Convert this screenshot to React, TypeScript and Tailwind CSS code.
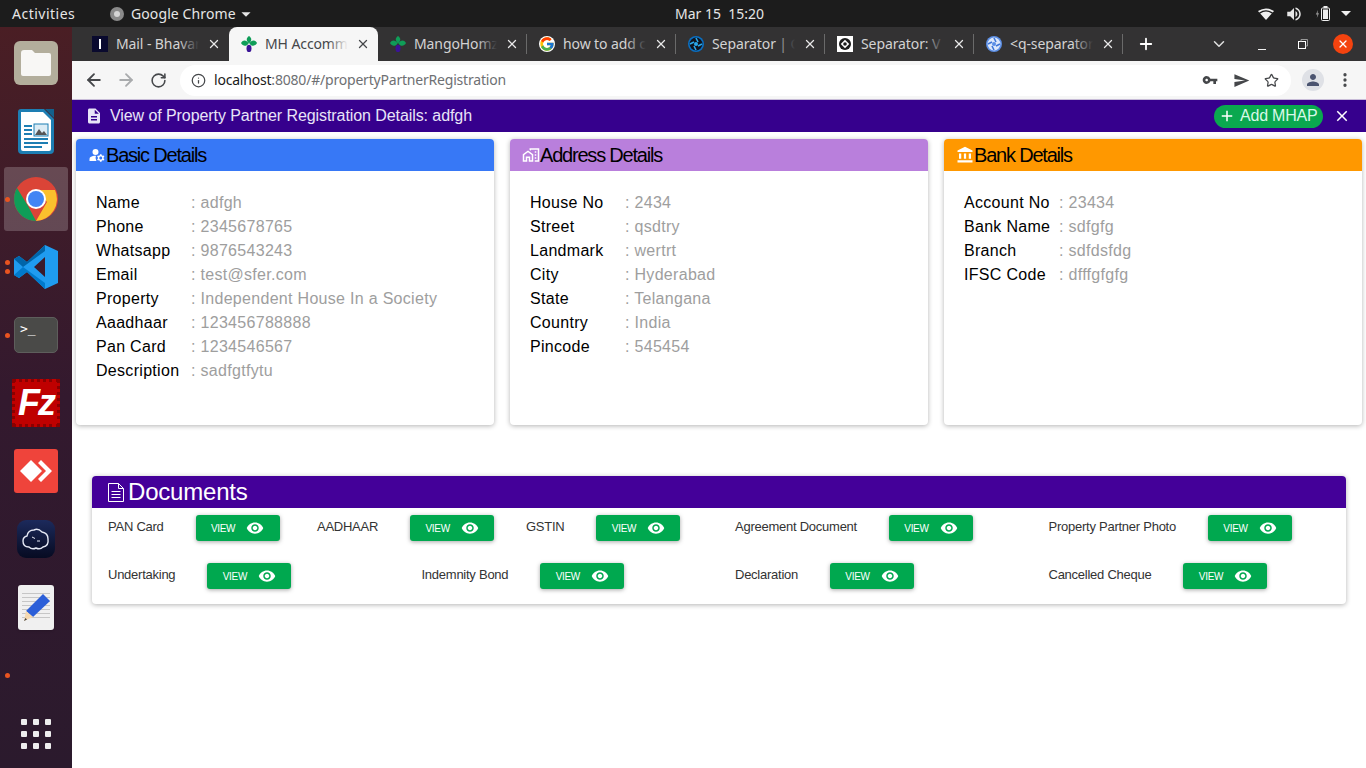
import React from 'react';
import { ArrowLeft, ArrowRight, ChevronDown, EllipsisVertical, Info, Plus, RotateCw, Star, X } from 'lucide-react';
import { FcGoogle } from 'react-icons/fc';
import {
  MdAccountBalance,
  MdAdd,
  MdArrowDropDown,
  MdClose,
  MdDescription,
  MdManageAccounts,
  MdOutlineHomeWork,
  MdPerson,
  MdSend,
  MdVisibility,
  MdVolumeUp,
  MdVpnKey,
} from 'react-icons/md';

const MangoIcon = () => (
  <svg viewBox="0 0 16 16" className="w-4 h-4">
    <path d="M8 0 C11 2 11 5 8 7.5 C5 5 5 2 8 0Z" fill="#0f9d58" />
    <path d="M0 7 C2 3.5 5.5 3.8 7.6 7.4 C5.5 10.5 2 10.5 0 7Z" fill="#0f9d58" />
    <path d="M16 7 C14 3.5 10.5 3.8 8.4 7.4 C10.5 10.5 14 10.5 16 7Z" fill="#0f9d58" />
    <ellipse cx="8" cy="12.4" rx="2.5" ry="3.6" fill="#3a1396" />
  </svg>
);

const MailIcon = () => (
  <div className="w-4 h-4 bg-[#0a0a2e] flex items-center justify-center">
    <div className="w-[2px] h-[10px] bg-white" />
  </div>
);

const QuasarIcon = ({ light }: { light?: boolean }) => (
  <svg viewBox="0 0 16 16" className="w-4 h-4">
    <circle cx="8" cy="8" r="8" fill={light ? '#5c8fe6' : '#0a6fc2'} />
    <circle cx="8" cy="8" r="6.4" fill={light ? '#dce8fb' : '#10131c'} />
    <circle cx="8" cy="8" r="2" fill={light ? '#5c8fe6' : '#2aa7e8'} />
    <path d="M8 2 L10 6 M14 8 L10 10 M8 14 L6 10 M2 8 L6 6" stroke={light ? '#3c74d8' : '#2aa7e8'} strokeWidth="1.6" />
  </svg>
);

const TargetIcon = () => (
  <svg viewBox="0 0 16 16" className="w-4 h-4">
    <rect width="16" height="16" fill="#fff" />
    <circle cx="8" cy="8" r="6" fill="#1c1c1c" />
    <rect x="5" y="5" width="6" height="6" transform="rotate(45 8 8)" fill="#fff" />
    <circle cx="8" cy="8" r="1.8" fill="#1c1c1c" />
  </svg>
);

const tabs = [
  { title: 'Mail - Bhavar', icon: <MailIcon />, sep: false },
  { title: 'MH Accomm', icon: <MangoIcon />, active: true, sep: false },
  { title: 'MangoHomz', icon: <MangoIcon />, sep: true },
  { title: 'how to add c', icon: <FcGoogle className="w-4 h-4 bg-white rounded-full" />, sep: true },
  { title: 'Separator | Q', icon: <QuasarIcon />, sep: true },
  { title: 'Separator: V', icon: <TargetIcon />, sep: true },
  { title: '<q-separator', icon: <QuasarIcon light />, sep: true },
];

const TopBar = () => (
  <div className="h-[27px] bg-[#1c1c1c] text-[#e6e6e6] text-[14px] flex items-center relative shrink-0">
    <span className="ml-3 w-[98px] tracking-[0.5px]">Activities</span>
    <div className="w-[14px] h-[14px] rounded-full bg-[#8a8a8a] flex items-center justify-center mr-[7px]">
      <div className="w-[6px] h-[6px] rounded-full bg-[#d5d5d5]" />
    </div>
    <span className="tracking-[0.1px]">Google Chrome</span>
    <MdArrowDropDown className="w-[22px] h-[22px] -ml-[1px]" />
    <span className="absolute left-[675px] whitespace-pre">Mar 15  15:20</span>
    <div className="ml-auto flex items-center mr-[15px]">
      <svg viewBox="0 0 16 12" className="w-4 h-3 text-[#f0f0f0]" fill="currentColor">
        <path d="M0 3 Q8 -2 16 3 L14.8 4.6 Q8 0 1.2 4.6Z" />
        <path d="M2.2 5.6 Q8 1.6 13.8 5.6 L8 12Z" />
      </svg>
      <MdVolumeUp className="ml-[11px] w-[18px] h-[18px]" />
      <svg viewBox="0 0 15 15" className="ml-[12px] w-[15px] h-[15px] text-[#f0f0f0]" fill="none" stroke="currentColor">
        <path d="M3 4 L0.8 8.5 H2.4 L1.8 12 L4 7.2 H2.6Z" fill="#9a9a9a" stroke="none" />
        <rect x="6.5" y="2" width="8" height="12.5" rx="1" />
        <rect x="8" y="3.5" width="5" height="9.5" fill="currentColor" stroke="none" />
        <rect x="8.5" y="0" width="4" height="2" fill="currentColor" stroke="none" />
      </svg>
      <div className="ml-[11px] w-0 h-0 border-x-[5px] border-x-transparent border-t-[5px] border-t-[#f0f0f0]" />
    </div>
  </div>
);

const TabStrip = () => (
  <div className="h-[34px] bg-[#333233] flex items-stretch pl-2 shrink-0 text-[14px] tracking-[-0.1px]">
    {tabs.map((t) => (
      <div
        key={t.title}
        className={`w-[149px] shrink-0 flex items-center pl-3 pr-[8px] gap-2 relative ${t.active ? 'bg-[#f6f6f6] rounded-t-lg text-[#45474a]' : 'text-[#d3d3d3]'}`}
      >
        {t.icon}
        <div className="flex-1 relative overflow-hidden whitespace-nowrap pb-[2px]">
          {t.title}
          <div className={`absolute right-0 inset-y-0 w-5 bg-linear-to-l to-transparent ${t.active ? 'from-[#f6f6f6]' : 'from-[#333233]'}`} />
        </div>
        <X className={`w-[14px] h-[14px] shrink-0 ${t.active ? 'text-[#45474a]' : 'text-[#e8e8e8]'}`} strokeWidth={2.2} />
        {t.sep && <div className="absolute right-0 top-[7px] bottom-[7px] w-[1px] bg-[#6a6a6a]" />}
      </div>
    ))}
    <div className="w-[46px] flex items-center justify-center text-white">
      <Plus className="w-[18px] h-[18px]" strokeWidth={2.4} />
    </div>
    <div className="flex-1 flex items-center justify-end text-[#e0e0e0] pr-[13px]">
      <ChevronDown className="w-[18px] h-[18px] mr-[30px]" />
      <div className="w-[8px] h-[1px] bg-[#f0f0f0] mt-[10px] mr-[32px]" />
      <svg viewBox="0 0 10 10" className="w-[10px] h-[10px] mr-[25px]" fill="none" stroke="currentColor">
        <rect x="0.5" y="2.5" width="7" height="7" stroke="#fff" />
        <path d="M3 2.5 V0.5 H9.5 V7 H7.5" stroke="#9a9a9a" />
      </svg>
      <div className="w-5 h-5 rounded-full bg-[#f4430f] flex items-center justify-center text-white">
        <X className="w-[12px] h-[12px]" strokeWidth={2.6} />
      </div>
    </div>
  </div>
);

const Toolbar = () => (
  <div className="h-[39px] bg-[#f6f6f6] border-b border-b-[#c8bcd8] flex items-center shrink-0">
    <ArrowLeft className="w-[20px] h-[20px] ml-[12px] text-[#45474a]" strokeWidth={2.2} />
    <ArrowRight className="w-[20px] h-[20px] ml-[12px] text-[#a9abad]" strokeWidth={2.2} />
    <RotateCw className="w-[17px] h-[17px] ml-[14px] text-[#45474a]" strokeWidth={2.2} />
    <div className="ml-[13px] h-[31px] w-[1111px] bg-white rounded-full flex items-center pl-[11px] pr-[12px] text-[14px]">
      <Info className="w-[15px] h-[15px] text-[#45474a]" strokeWidth={2} />
      <div className="ml-[8px] tracking-[-0.2px] pb-[2px]">
        <span className="text-[#1a1a1a]">localhost</span>
        <span className="text-[#6e7073]">:8080/#/propertyPartnerRegistration</span>
      </div>
      <MdVpnKey className="ml-auto w-[16px] h-[16px] text-[#45474a] mr-[15px]" />
      <MdSend className="w-[17px] h-[17px] text-[#45474a] mr-[14px]" />
      <Star className="w-[15px] h-[15px] text-[#45474a]" strokeWidth={2} />
    </div>
    <div className="ml-[11px] w-[22px] h-[22px] rounded-full bg-[#dfe1e6] flex items-center justify-center">
      <MdPerson className="w-[18px] h-[18px] text-[#4b5470]" />
    </div>
    <EllipsisVertical className="ml-[12px] w-[18px] h-[18px] text-[#45474a]" strokeWidth={2.4} />
  </div>
);

const ChromeLogo = () => (
  <svg viewBox="0 0 44 44" className="w-11 h-11">
    <circle cx="22" cy="22" r="22" fill="#db4437" />
    <path d="M22 44 A22 22 0 0 1 3 11 L14 29 L22 44Z" fill="#0f9d58" />
    <path d="M22 44 L33 25 L22 13 H41 A22 22 0 0 1 22 44Z" fill="#fbc02d" />
    <circle cx="22" cy="22" r="10" fill="#fff" />
    <circle cx="22" cy="22" r="8" fill="#4285f4" />
  </svg>
);

const dockItems = [
  {
    icon: (
      <div className="w-11 h-11 rounded-[6px] bg-[#b3ae9c] flex items-center justify-center">
        <svg viewBox="0 0 32 28" className="w-8 h-7">
          <path d="M1 4 Q1 1 4 1 H12 L15 4 H29 Q31 4 31 6 V25 Q31 27 29 27 H3 Q1 27 1 25Z" fill="#f8f7f5" />
        </svg>
      </div>
    ),
  },
  {
    icon: (
      <svg viewBox="0 0 36 45" className="w-9 h-[45px]">
        <path d="M3 0 H26 L36 10 V41 Q36 45 32 45 H4 Q0 45 0 41 V3 Q0 0 3 0Z" fill="#1d7eb3" />
        <path d="M3 3 H25 L33 11 V40 Q33 42 31 42 H5 Q3 42 3 40Z" fill="#fff" />
        <path d="M27 0 L36 0 V9Z" fill="#14608c" />
        <path d="M6 17 H14 M6 21 H14 M6 25 H14 M6 30 H30 M6 34 H30 M6 38 H24" stroke="#1d7eb3" strokeWidth="2" />
        <rect x="16" y="15" width="14" height="12" fill="#dcecf5" stroke="#1d7eb3" />
        <path d="M17 26 L21 20 L24 24 L26 22 L29 26Z" fill="#555" />
      </svg>
    ),
  },
  { icon: <ChromeLogo />, active: true, dots: 1 },
  {
    icon: (
      <svg viewBox="0 0 44 44" className="w-11 h-11">
        <path d="M31 0 L44 6 V38 L31 44 L13 27 L5 33 L0 30 V14 L5 11 L13 17Z M31 12 L20 22 L31 32Z" fill="#1f9cf0" fillRule="evenodd" />
        <path d="M31 0 L13 17 L5 11 L0 14 L9 22 L31 6Z" fill="#0065a9" />
        <path d="M0 30 L5 33 L13 27 L31 44 V38 L9 22Z" fill="#007acc" />
      </svg>
    ),
    dots: 2,
  },
  {
    icon: (
      <div className="w-11 h-9 rounded-[5px] bg-[#4a4a48] border border-[#5e5e5c] text-white text-[13px] leading-none pl-[5px] pt-[4px] font-['DejaVu_Sans_Mono',monospace]">
        &gt;_
      </div>
    ),
    dots: 1,
  },
  {
    icon: (
      <div className="w-12 h-12 bg-[#bf0000] flex items-center justify-center border-[3px] border-dotted border-[#8a0000]">
        <span className="text-white text-[36px] leading-none font-bold italic font-['Liberation_Sans',sans-serif] tracking-[-2px]">Fz</span>
      </div>
    ),
  },
  {
    icon: (
      <div className="w-11 h-11 rounded-[3px] bg-[#ef443b] flex items-center justify-center">
        <svg viewBox="0 0 32 22" className="w-8 h-[22px]">
          <path d="M11 0 L22 11 L11 22 L0 11Z" fill="#fff" />
          <path d="M21 0 L32 11 L21 22 L18 19 L26 11 L18 3Z" fill="#fff" />
        </svg>
      </div>
    ),
  },
  {
    icon: (
      <div className="w-[38px] h-[38px] rounded-[9px] bg-linear-to-b from-[#1c2a5c] to-[#070b22] flex items-center justify-center">
        <svg viewBox="0 0 28 24" className="w-7 h-6" fill="none" stroke="#e6e9f5" strokeWidth="1.4">
          <path d="M7 20 Q1 20 1 14 Q1 10 5 9 Q6 3 12 3 Q16 1 20 5 Q26 6 26 12 Q27 19 21 20 Q18 23 14 21 Q10 23 7 20Z" />
          <path d="M10 10 L13 11.5 M15 14 H18" strokeWidth="1" />
        </svg>
      </div>
    ),
  },
  {
    icon: (
      <div className="w-9 h-[45px] rounded-[3px] bg-[#f0f0f0] relative flex flex-col gap-[3px] px-[4px] pt-[8px] shadow-sm">
        {[0, 1, 2, 3, 4, 5, 6].map((i) => (
          <div key={i} className="h-[1px] bg-[#c6c6c6]" />
        ))}
        <svg viewBox="0 0 30 30" className="absolute left-[4px] top-[8px] w-[30px] h-[30px]">
          <path d="M21 1 L28 8 L11 24 L4 18Z" fill="#2c5fd8" />
          <path d="M4 18 L11 24 L2 28Z" fill="#f5d9b0" />
          <path d="M3.4 25 L5 26.5 L2 28Z" fill="#444" />
        </svg>
      </div>
    ),
  },
  { icon: null, dots: 1 },
];

const Dock = () => (
  <div className="w-[72px] shrink-0 bg-linear-to-b from-[#4a1e24] via-[#33192e] to-[#2b1a2d] flex flex-col items-center pt-[2px]">
    {dockItems.map((item, i) => (
      <div key={i} className="h-[68px] w-full flex items-center justify-center relative">
        {item.active && <div className="absolute left-1 w-16 h-16 rounded-[3px] bg-white/20" />}
        {item.dots && (
          <div className="absolute left-[5px] flex flex-col gap-1">
            {Array.from({ length: item.dots }).map((_, d) => (
              <div key={d} className="w-[5px] h-[5px] rounded-full bg-[#e95420]" />
            ))}
          </div>
        )}
        <div className="relative">{item.icon}</div>
      </div>
    ))}
    <div className="mt-auto mb-[19px] grid grid-cols-3 gap-[6px]">
      {[0, 1, 2, 3, 4, 5, 6, 7, 8].map((i) => (
        <div key={i} className="w-[6px] h-[6px] rounded-[1px] bg-[#eeeeee]" />
      ))}
    </div>
  </div>
);

const cards = [
  {
    title: 'Basic Details',
    header: 'bg-[#3778f6]',
    icon: <MdManageAccounts className="w-[18px] h-[18px] text-white" />,
    rows: [
      ['Name', 'adfgh'],
      ['Phone', '2345678765'],
      ['Whatsapp', '9876543243'],
      ['Email', 'test@sfer.com'],
      ['Property', 'Independent House In a Society'],
      ['Aaadhaar', '123456788888'],
      ['Pan Card', '1234546567'],
      ['Description', 'sadfgtfytu'],
    ],
  },
  {
    title: 'Address Details',
    header: 'bg-[#b97fdc]',
    icon: <MdOutlineHomeWork className="w-[18px] h-[18px] text-white" />,
    rows: [
      ['House No', '2434'],
      ['Street', 'qsdtry'],
      ['Landmark', 'wertrt'],
      ['City', 'Hyderabad'],
      ['State', 'Telangana'],
      ['Country', 'India'],
      ['Pincode', '545454'],
    ],
  },
  {
    title: 'Bank Details',
    header: 'bg-[#ff9800]',
    icon: <MdAccountBalance className="w-[18px] h-[18px] text-white" />,
    rows: [
      ['Account No', '23434'],
      ['Bank Name', 'sdfgfg'],
      ['Branch', 'sdfdsfdg'],
      ['IFSC Code', 'dfffgfgfg'],
    ],
  },
];

const docRows = [
  [
    { label: 'PAN Card', span: 'col-span-2' },
    { label: 'AADHAAR', span: 'col-span-2' },
    { label: 'GSTIN', span: 'col-span-2' },
    { label: 'Agreement Document', span: 'col-span-3' },
    { label: 'Property Partner Photo', span: 'col-span-3' },
  ],
  [
    { label: 'Undertaking', span: 'col-span-3' },
    { label: 'Indemnity Bond', span: 'col-span-3' },
    { label: 'Declaration', span: 'col-span-3' },
    { label: 'Cancelled Cheque', span: 'col-span-3' },
  ],
];

const ViewButton = () => (
  <button className="ml-8 w-[84px] h-[26px] rounded-[3px] bg-[#00a84f] text-white text-[10px] tracking-[-0.3px] flex items-center justify-center gap-[11px] shadow-[0_1px_4px_rgba(0,0,0,0.35)]">
    VIEW
    <MdVisibility className="w-[18px] h-[18px]" />
  </button>
);

const Page = () => (
  <div className="flex-1 bg-white font-['Liberation_Sans',sans-serif] min-h-0">
    <div className="h-[32px] bg-[#36008d] text-white flex items-center pl-[13px] pr-[15px]">
      <MdDescription className="w-[18px] h-[18px] text-[#e8e4f8]" />
      <span className="ml-[7px] text-[16px] tracking-[-0.08px] text-[#e8e4f8]">View of Property Partner Registration Details: adfgh</span>
      <button className="ml-auto h-[23px] w-[109px] rounded-full bg-[#0aa84f] flex items-center pl-[4px] text-[16px] tracking-[-0.2px] text-[#d8f8e8]">
        <MdAdd className="w-[18px] h-[18px] text-white" />
        <span className="ml-[4px]">Add MHAP</span>
      </button>
      <MdClose className="ml-[10px] w-[18px] h-[18px]" />
    </div>

    <div className="grid grid-cols-3 gap-4 pl-1 pr-1 mt-[7px]">
      {cards.map((c) => (
        <div key={c.title} className="h-[286px] bg-white rounded-[4px] shadow-[0_1px_5px_rgba(0,0,0,0.3)] overflow-hidden">
          <div className={`h-[32px] flex items-center pl-[12px] text-black text-[20px] tracking-[-1.2px] ${c.header}`}>
            {c.icon}
            <span>{c.title}</span>
          </div>
          <div className="pt-[20px] pl-5 text-[16px] leading-6">
            {c.rows.map(([label, value]) => (
              <div key={label} className="flex">
                <span className="w-[95px] shrink-0 text-black tracking-[0.3px]">{label}</span>
                <span className="text-[#9e9e9e] tracking-[0.3px]">: {value}</span>
              </div>
            ))}
          </div>
        </div>
      ))}
    </div>

    <div className="mx-5 mt-[51px] bg-white rounded-[4px] shadow-[0_1px_5px_rgba(0,0,0,0.3)] overflow-hidden">
      <div className="h-[32px] bg-[#440099] text-white flex items-center pl-4 text-[24px] tracking-[-0.2px]">
        <svg viewBox="0 0 16 19" className="w-4 h-[19px]" fill="none" stroke="currentColor">
          <path d="M0.5 0.5 H10.5 L15.5 5.5 V18.5 H0.5Z" />
          <path d="M10.5 0.5 V5.5 H15.5 M3.5 8.5 H12.5 M3.5 11.5 H12.5 M3.5 14.5 H12.5" />
        </svg>
        <span className="ml-1">Documents</span>
      </div>
      {docRows.map((row, i) => (
        <div key={i} className="grid grid-cols-12 h-[48px]">
          {row.map((d) => (
            <div key={d.label} className={`${d.span} pl-4 pt-[7px] flex items-start`}>
              <span className="text-[13px] leading-[24px] tracking-[-0.25px] text-[#333]">{d.label}</span>
              <ViewButton />
            </div>
          ))}
        </div>
      ))}
    </div>
  </div>
);

export default function App() {
  return (
    <div className="w-[1366px] h-[768px] overflow-hidden flex flex-col font-['Noto_Sans',sans-serif]">
      <TopBar />
      <div className="flex-1 flex min-h-0">
        <Dock />
        <div className="flex-1 flex flex-col min-w-0">
          <TabStrip />
          <Toolbar />
          <Page />
        </div>
      </div>
    </div>
  );
}
